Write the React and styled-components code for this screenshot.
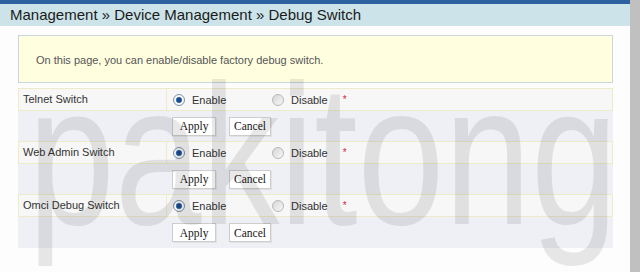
import React, { Fragment } from "react";
import styled, { createGlobalStyle } from "styled-components";

const Global = createGlobalStyle`
  html, body { margin: 0; padding: 0; background: #fff; }
  body { font-family: "Liberation Sans", Arial, sans-serif; }
`;

const Page = styled.div`
  display: flex;
  width: 640px;
  height: 272px;
  overflow: hidden;
  background: #fdfdfd;
`;

const Main = styled.div`
  position: relative;
  flex: 1;
  display: flex;
  flex-direction: column;
  overflow: hidden;
`;

const TopBar = styled.div`
  height: 4px;
  background: #2d62a0;
`;

const Header = styled.div`
  height: 22px;
  background: #cce4e9;
  padding-left: 10px;
  font-size: 15px;
  line-height: 22px;
  color: #1b1b1b;
`;

const Content = styled.div`
  padding: 9px 17px 0 18px;
`;

const Info = styled.div`
  box-sizing: border-box;
  height: 48px;
  border: 1px solid #c8d7df;
  background: #ffffe0;
  padding: 17px 17px 0;
  font-size: 11px;
  line-height: 14px;
  color: #555;
`;

const Table = styled.div`
  margin-top: 5px;
  display: flex;
  flex-direction: column;
`;

const SettingRow = styled.div`
  display: grid;
  grid-template-columns: 148px 1fr;
  box-sizing: border-box;
  height: 23px;
  background: #f7f7f7;
  border: 1px solid #eeebc8;
`;

const Label = styled.div`
  padding-left: 4px;
  border-right: 1px solid #eeebc8;
  font-size: 11px;
  line-height: 21px;
  color: #333;
`;

const ValueCell = styled.div`
  display: flex;
  align-items: center;
  padding-left: 6px;
  font-size: 11px;
  color: #333;
`;

const Option = styled.label`
  display: flex;
  align-items: center;
  gap: 7px;
  width: ${(p) => (p.$w ? `${p.$w}px` : "auto")};
`;

const Radio = styled.span`
  box-sizing: border-box;
  width: 12px;
  height: 12px;
  border-radius: 50%;
  border: 1px solid ${(p) => (p.$checked ? "#8193a8" : "#b9b9b9")};
  background: ${(p) =>
    p.$checked
      ? "radial-gradient(circle at 50% 50%, #1c4a8a 0 2px, #4f7fc0 2.8px, #ffffff 3.6px, #e6e6e6 100%)"
      : "linear-gradient(135deg, #d6d6d6, #f8f8f8)"};
`;

const Star = styled.span`
  margin-left: 15px;
  color: #d4294f;
  font-size: 10px;
  line-height: 12px;
`;

const ButtonRow = styled.div`
  display: grid;
  grid-template-columns: 150px 1fr;
  height: ${(p) => p.$h}px;
  background: #eef0f6;
`;

const ButtonCell = styled.div`
  display: flex;
  align-items: center;
  gap: 13px;
  padding-left: 4px;
`;

const Btn = styled.button`
  box-sizing: border-box;
  width: ${(p) => p.$w}px;
  height: 19px;
  padding: 0;
  border: 1px solid #cdcdcd;
  background: #fff;
  box-shadow: 1px 1px 0 #e2e2e2;
  font-family: "Liberation Serif", "Times New Roman", serif;
  font-size: 11.5px;
  color: #151515;
`;

const Scrollbar = styled.div`
  width: 10px;
  background: #c0c0c0;
`;

const Watermark = styled.div`
  position: absolute;
  left: 28px;
  top: 55px;
  font-family: "Liberation Sans", Arial, sans-serif;
  font-size: 200px;
  line-height: 1;
  color: rgba(0, 0, 0, 0.09);
  transform: scaleX(0.78);
  transform-origin: left top;
  pointer-events: none;
  white-space: nowrap;
`;

const switches = [
  { label: "Telnet Switch", h: 30 },
  { label: "Web Admin Switch", h: 30 },
  { label: "Omci Debug Switch", h: 31 },
];

export default function App() {
  return (
    <>
      <Global />
      <Page>
        <Main>
          <TopBar />
          <Header>Management » Device Management » Debug Switch</Header>
          <Content>
            <Info>On this page, you can enable/disable factory debug switch.</Info>
            <Table>
              {switches.map((s) => (
                <Fragment key={s.label}>
                  <SettingRow>
                    <Label>{s.label}</Label>
                    <ValueCell>
                      <Option $w={99}>
                        <Radio $checked />
                        Enable
                      </Option>
                      <Option>
                        <Radio />
                        Disable
                      </Option>
                      <Star>*</Star>
                    </ValueCell>
                  </SettingRow>
                  <ButtonRow $h={s.h}>
                    <div />
                    <ButtonCell>
                      <Btn $w={44}>Apply</Btn>
                      <Btn $w={42}>Cancel</Btn>
                    </ButtonCell>
                  </ButtonRow>
                </Fragment>
              ))}
            </Table>
          </Content>
          <Watermark>pakitong</Watermark>
        </Main>
        <Scrollbar />
      </Page>
    </>
  );
}
